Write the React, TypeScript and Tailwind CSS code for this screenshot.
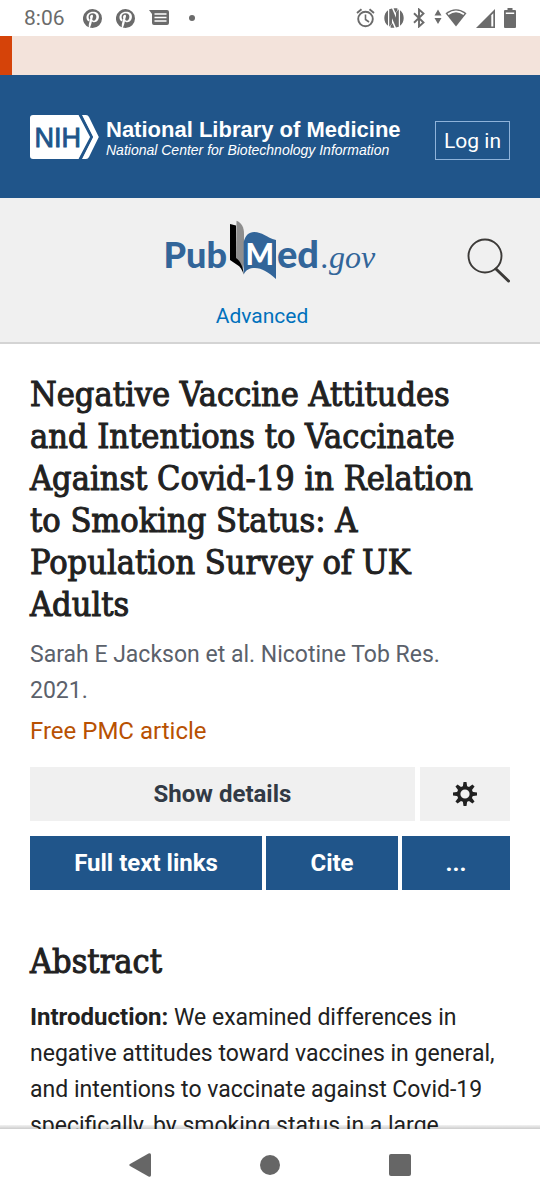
import React from 'react';

const TEETH = [0, 45, 90, 135, 180, 225, 270, 315];

function PinterestIcon() {
  return (
    <svg width="19" height="19" viewBox="0 0 24 24" fill="#6b6b6b" aria-hidden="true">
      <path
        fillRule="evenodd"
        d="M12 0a12 12 0 1 1 0 24c-1.200 0-2.400-.2-3.500-.5 1.100-1.900 1.500-3 2-5l.8-3c.5.8 1.600 1.300 2.800 1.300 3.700 0 6-3.300 6-7.200 0-3.400-2.900-6-7.200-6C7.500 3.600 4.400 7 4.400 10.600c0 2.300 1.100 4.200 2.800 5 .4.100.5 0 .6-.3l.5-1.900c-.9-.9-1.300-1.900-1.300-3.200 0-2.500 2-4.700 5.300-4.700 2.800 0 4.600 1.700 4.600 4.300 0 3-1.500 5-3.300 5-1.400 0-2.200-1-1.900-2.200.4-1.500 1-2.700 1-3.700 0-1-.5-1.700-1.500-1.700-1.300 0-2.300 1.300-2.300 3 0 1 .3 1.800.3 1.800L7.500 18.500c-.3 1.600-.2 3-.1 4.600A12 12 0 0 1 12 0Z"
      />
    </svg>
  );
}

function MessageIcon() {
  return (
    <svg width="20" height="16" viewBox="0 0 20 16" fill="none" aria-hidden="true">
      <path d="M0 0h18a2 2 0 0 1 2 2v11a2 2 0 0 1-2 2H5a2 2 0 0 1-2-2V4Z" fill="#6b6b6b" />
      <path d="M5.500 4h12M5.500 7.500h12M5.500 11h12" stroke="#fff" strokeWidth="1.300" />
    </svg>
  );
}

function AlarmIcon() {
  return (
    <svg width="19" height="20" viewBox="0 0 19 20" fill="none" stroke="#6b6b6b" aria-hidden="true">
      <circle cx="9.500" cy="11" r="7.300" strokeWidth="1.900" />
      <path d="M9.500 6.500v5l3.500 2.500" strokeWidth="1.600" />
      <path d="M1 5l4.500-3.700M18 5l-4.500-3.700" strokeWidth="1.900" />
    </svg>
  );
}

function NfcIcon() {
  return (
    <svg width="20" height="20" viewBox="0 0 20 20" aria-hidden="true">
      <path d="M4 2.200v15.600C1.600 16.200.3 13.200.3 10S1.600 3.800 4 2.200ZM16 2.200v15.600c2.400-1.600 3.700-4.600 3.700-7.800S18.400 3.800 16 2.200Z" fill="#6b6b6b" />
      <path d="M5.200 18.700V1.300L8 .4l4 9.300V4.500l2.800-3.200v17.400l-2.800.9-4-9.300v5.200Z" fill="#6b6b6b" />
      <path d="M9.600.3h3.800v2.200l-2 2.200ZM10.400 19.700H6.600v-2.200l2-2.200Z" fill="#6b6b6b" />
    </svg>
  );
}

function BluetoothIcon() {
  return (
    <svg width="12" height="20" viewBox="0 0 12 20" fill="none" stroke="#6b6b6b" strokeWidth="1.900" aria-hidden="true">
      <path d="M1 5.200l9.500 9.300L6 18.500v-17l4.500 4L1 14.800" />
    </svg>
  );
}

function WifiIcon() {
  return (
    <svg width="33" height="20" viewBox="0 0 33 20" aria-hidden="true">
      <path d="M0.500 7.500L4 1.500l3.500 6ZM0.500 10h7L4 16Z" fill="#6b6b6b" />
      <path d="M11.500 5.200Q22 -2.600 32.500 5.200L22 18.500Z" fill="#6b6b6b" />
      <path d="M13.500 5.400Q22 -.6 30.500 5.400L29.400 6.900Q22 1.600 14.600 6.900Z" fill="#fff" />
    </svg>
  );
}

function SignalIcon() {
  return (
    <svg width="19" height="19" viewBox="0 0 19 19" aria-hidden="true">
      <path d="M0 19L19 0v19Z" fill="#6b6b6b" />
      <path d="M15.300 6.200l2-2v13.300h-2Z" fill="#fff" />
    </svg>
  );
}

function BatteryIcon() {
  return (
    <svg width="12" height="20" viewBox="0 0 12 20" aria-hidden="true">
      <path d="M3.500 0h5v2H11a1 1 0 0 1 1 1v16a1 1 0 0 1-1 1H1a1 1 0 0 1-1-1V3a1 1 0 0 1 1-1h2.500Z" fill="#6b6b6b" />
      <path d="M1.800 4.500h8.400v1.500H1.800Z" fill="#fff" />
    </svg>
  );
}

function NihBadge() {
  return (
    <svg width="69" height="44" viewBox="0 0 69 44" aria-hidden="true">
      <path d="M3 0h46l12 22-12 22H3a3 3 0 0 1-3-3V3a3 3 0 0 1 3-3Z" fill="#fff" />
      <path d="M52 0h4q2 0 3 2l9.800 20L59 42q-1 2-3 2h-4l11-22Z" fill="#fff" />
      <path d="M49.500-1l12 23-12 23" fill="none" stroke="#20558a" strokeWidth="2.600" />
      <text x="4.500" y="31.500" fontFamily="Liberation Sans, Arial, sans-serif" fontSize="27" fill="#20558a" stroke="#20558a" strokeWidth="0.900">
        NIH
      </text>
    </svg>
  );
}

function PubMedLogo() {
  return (
    <svg width="212" height="60" viewBox="0 0 212 60" role="img" aria-label="PubMed.gov" className="overflow-visible">
      <text x="-0.500" y="47.500" fontFamily="Lato, sans-serif" fontWeight="900" fontSize="36" fill="#326599">
        Pub
      </text>
      <path d="M72.500.7C77.500 2.500 80 7.500 80 13.500V44L79 49 72 39Z" fill="#8e8e8e" />
      <path d="M66 4l6 1.500V38c4.500 3.500 7 8 7.700 16.500-1.500-5-3.500-8-6.700-9.800L66 40Z" fill="#000" />
      <path d="M79.700 54.500V22c1.500-6.500 5-10 10.500-10 8 0 12 5.500 21.800 8v39c-8-7-14-11-21-11-5.500 0-9 1.700-11.300 6.500Z" fill="#326599" />
      <text x="81.500" y="45" fontFamily="Lato, sans-serif" fontWeight="900" fontSize="30" fill="#fff">
        M
      </text>
      <text x="113" y="47.500" fontFamily="Lato, sans-serif" fontWeight="900" fontSize="38" fill="#326599">
        ed
      </text>
      <text x="157" y="47.500" fontFamily="Liberation Serif, serif" fontStyle="italic" fontSize="32" fill="#326599">
        .gov
      </text>
    </svg>
  );
}

function GearIcon() {
  return (
    <svg width="24" height="24" viewBox="-12 -12 24 24" aria-hidden="true">
      <circle r="6.300" fill="none" stroke="#212121" strokeWidth="3.400" />
      {TEETH.map((angle) => (
        <path key={angle} d="M-2.300-6.500l.8-5.500h3l.8 5.500Z" fill="#212121" transform={`rotate(${angle})`} />
      ))}
    </svg>
  );
}

function StatusBar() {
  return (
    <div className="flex h-9 shrink-0 items-center justify-between bg-white px-6 text-[#6b6b6b]">
      <div className="flex items-center">
        <span className="text-[21px] leading-6">8:06</span>
        <div className="ml-[18px] flex items-center gap-3.5">
          <PinterestIcon />
          <PinterestIcon />
          <MessageIcon />
        </div>
        <span className="ml-5 size-1.5 rounded-full bg-[#6b6b6b]" />
      </div>
      <div className="flex items-center gap-[9px]">
        <AlarmIcon />
        <NfcIcon />
        <BluetoothIcon />
        <WifiIcon />
        <SignalIcon />
        <BatteryIcon />
      </div>
    </div>
  );
}

const primary = 'flex h-[54px] items-center justify-center bg-[#20558a] text-2xl font-bold text-white';
const heading =
  "font-['DejaVu_Serif_Condensed','DejaVu_Serif',serif] text-[34px] leading-[42px] [-webkit-text-stroke:1px_#212121]";

export default function App() {
  return (
    <div className="flex h-screen flex-col bg-white font-[Roboto,sans-serif] text-[#212121]">
      <StatusBar />
      <div className="min-h-0 flex-1 overflow-hidden">
        <div className="h-[39px] border-l-12 border-[#d54309] bg-[#f3e3db]" />
        <header>
          <div className="flex h-[123px] items-center justify-between bg-[#20558a] px-[30px] text-white">
            <a href="#ncbi" className="flex items-center gap-[7px] font-['Liberation_Sans',Arial,sans-serif]">
              <NihBadge />
              <span className="flex flex-col pt-0.5 whitespace-nowrap">
                <span className="text-[22px] leading-6 font-bold">National Library of Medicine</span>
                <span className="text-sm leading-4 italic">National Center for Biotechnology Information</span>
              </span>
            </a>
            <button type="button" className="mt-2 h-[39px] border border-[#8fb3da] px-2 text-[21px] leading-8">
              Log in
            </button>
          </div>
          <div className="grid h-[146px] grid-cols-[1fr_auto_1fr] border-b-2 border-[#d4d4d4] bg-[#f0f0f0] px-[30px] pt-[22px]">
            <div className="col-start-2 flex flex-col items-center">
              <a href="#home" className="block">
                <PubMedLogo />
              </a>
              <a href="#advanced" className="mt-5 mr-4 text-[21px] leading-8 text-[#0071bc]">
                Advanced
              </a>
            </div>
            <button type="button" aria-label="Search" className="mt-[18px] self-start justify-self-end">
              <svg width="43" height="46" viewBox="0 0 43 46" fill="none" stroke="#3c3a38" aria-hidden="true">
                <circle cx="18" cy="18" r="16.500" strokeWidth="1.900" />
                <path d="M29 31l12.500 12" strokeWidth="3" strokeLinecap="round" />
              </svg>
            </button>
          </div>
        </header>
        <main className="px-[30px] pt-[29px]">
          <h1 className={heading}>
            Negative Vaccine Attitudes
            <br />
            and Intentions to Vaccinate
            <br />
            Against Covid-19 in Relation
            <br />
            to Smoking Status: A
            <br />
            Population Survey of UK
            <br />
            Adults
          </h1>
          <p className="mt-3 text-[23px] leading-9 text-[#5b616b]">
            Sarah E Jackson et al. Nicotine Tob Res.
            <br />
            2021.
          </p>
          <p className="mt-1 text-2xl leading-9 text-[#b85102]">Free PMC article</p>
          <div className="mt-[18px] grid grid-cols-[1fr_90px] gap-[5px]">
            <button type="button" className="h-[54px] bg-[#f0f0f0] text-2xl font-bold text-[#323a45]">
              Show details
            </button>
            <button type="button" aria-label="Settings" className="flex items-center justify-center bg-[#f0f0f0]">
              <GearIcon />
            </button>
          </div>
          <div className="mt-[15px] grid grid-cols-[232fr_132fr_108fr] gap-1">
            <button type="button" className={primary}>Full text links</button>
            <button type="button" className={primary}>Cite</button>
            <button type="button" aria-label="More actions" className={primary}>...</button>
          </div>
          <h2 className={`mt-[50px] ${heading}`}>Abstract</h2>
          <p className="mt-[17px] text-[23px] leading-9">
            <strong className="text-2xl leading-9 font-bold">Introduction:</strong> We examined differences in negative
            attitudes toward vaccines in general, and intentions to vaccinate against Covid-19 specifically, by smoking
            status in a large
          </p>
        </main>
      </div>
      <nav
        aria-label="System"
        className="relative grid h-[71px] shrink-0 grid-cols-[130px_130px_130px] place-content-center place-items-center bg-white"
      >
        <div className="absolute inset-x-0 -top-1 h-1 bg-linear-to-b from-black/5 to-black/20" />
        <button type="button" aria-label="Back">
          <svg width="22" height="24" viewBox="0 0 22 24" fill="#666" aria-hidden="true">
            <path d="M1 11L19.500.5Q22-.5 22 2v20q0 2.500-2.500 1.500L1 13q-1.500-1 0-2Z" />
          </svg>
        </button>
        <button type="button" aria-label="Home" className="size-5 rounded-full bg-[#666]" />
        <button type="button" aria-label="Recent apps" className="size-[22px] rounded-xs bg-[#666]" />
      </nav>
    </div>
  );
}
